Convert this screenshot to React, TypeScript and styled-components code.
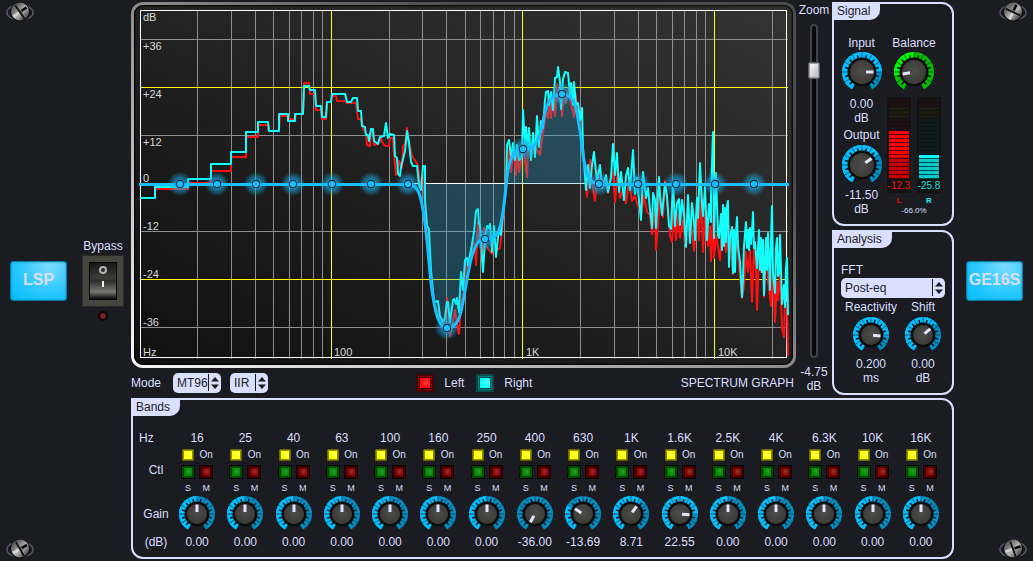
import React, { useState } from 'react';
import styled, { createGlobalStyle, css } from 'styled-components';

const INK = '#1b1c22';
const PALE = '#dadfff';

const GlobalStyle = createGlobalStyle`
  *, *::before, *::after { box-sizing: border-box; }
  body {
    margin: 0;
    background: ${INK};
    color: ${PALE};
    font-family: "Liberation Sans", Arial, sans-serif;
    font-size: 12px;
    line-height: 14px;
  }
  button, select, input { font: inherit; margin: 0; }
`;

/* ---------- page skeleton ---------- */

const Page = styled.div`
  display: grid;
  grid-template-columns: 131px minmax(0, 1fr) 79px;
  min-height: 100vh;
`;

const Rail = styled.aside<{ $side: 'left' | 'right' }>`
  display: flex;
  flex-direction: column;
  justify-content: space-between;
  align-items: ${p => (p.$side === 'left' ? 'flex-start' : 'flex-end')};
  padding: 2px 6px;
`;

const RailControls = styled.div`
  display: flex;
  align-items: center;
  gap: 15px;
  padding: 0 4px;
`;

const Main = styled.main`
  display: flex;
  flex-direction: column;
  padding: 2px 0;
`;

const Upper = styled.div`
  display: grid;
  grid-template-columns: minmax(0, 1fr) 36px 122px;
`;

const GraphColumn = styled.div`
  display: flex;
  flex-direction: column;
`;

const GraphFrame = styled.div`
  border: 3px solid transparent;
  border-radius: 12px;
  padding: 1px;
  background:
    linear-gradient(to top right, #101010, #1a1a1a 30%, #262626 60%, #333333) padding-box,
    linear-gradient(to top right, #f8f8f8, #b8b8b8 30%, #8c8c8c 50%, #4a4a4a 75%) border-box;
  box-shadow: inset 0 0 2px 1px #000000;
`;

const GraphSvg = styled.svg`
  display: block;
  width: 100%;
  height: auto;
  font-size: 11px;
  fill: #d8d8d8;
`;

const ModeBar = styled.div`
  display: flex;
  justify-content: space-between;
  align-items: center;
  height: 30px;
  padding-right: 2px;
`;

const Inline = styled.div<{ $gap: number }>`
  display: flex;
  align-items: center;
  gap: ${p => p.$gap}px;
`;

const InlineLabel = styled.label<{ $gap?: number }>`
  display: flex;
  align-items: center;
  gap: ${p => p.$gap ?? 10}px;
`;

const ZoomColumn = styled.div`
  display: flex;
  flex-direction: column;
  align-items: center;
  padding: 1px 0 4px;
  text-align: center;
`;

const SideColumn = styled.div`
  display: flex;
  flex-direction: column;
  gap: 4px;
  padding-bottom: 3px;
`;

/* ---------- panels ---------- */

const Panel = styled.section<{ $grow?: boolean }>`
  position: relative;
  border: 2px solid ${PALE};
  border-radius: 0 12px 12px 12px;
  padding-top: 31px;
  ${p => p.$grow && 'flex: 1;'}
`;

const PanelTitle = styled.h2`
  position: absolute;
  left: -2px;
  top: -2px;
  height: 18px;
  margin: 0;
  padding: 2px 10px 2px 5px;
  border-radius: 0 0 10px 0;
  background: ${PALE};
  color: ${INK};
  font-size: 12px;
  font-weight: 400;
  line-height: 14px;
`;

const SignalBody = styled.div`
  display: grid;
  grid-template-columns: 1fr 1fr;
  padding: 1px 11px 8px 2px;
`;

const Stack = styled.div`
  display: flex;
  flex-direction: column;
  align-items: center;
  text-align: center;
  white-space: nowrap;
`;

const AnalysisBody = styled.div`
  display: flex;
  flex-direction: column;
  padding: 0 7px 8px;
`;

const AnalysisKnobs = styled.div`
  display: grid;
  grid-template-columns: 52px 52px;
  padding: 2px 0 0 4px;
`;

/* ---------- selects ---------- */

const SelectShell = styled.span<{ $width?: number }>`
  position: relative;
  display: block;
  height: 20px;
  width: ${p => (p.$width ? `${p.$width}px` : '100%')};
  margin-top: ${p => (p.$width ? 0 : 1)}px;
`;

const NativeSelect = styled.select`
  appearance: none;
  display: block;
  width: 100%;
  height: 20px;
  padding: 0 0 0 4px;
  border: 0;
  border-radius: 5px;
  background: ${PALE};
  color: ${INK};
`;

const SelectArrows = styled.svg`
  position: absolute;
  right: 0;
  top: 0;
  pointer-events: none;
`;

function Select({ id, value, width, name }: { id: string; value: string; width?: number; name?: string }) {
  return (
    <SelectShell $width={width}>
      <NativeSelect id={id} defaultValue={value} aria-label={name}>
        <option>{value}</option>
      </NativeSelect>
      <SelectArrows width="14" height="20" viewBox="0 0 14 20" aria-hidden="true">
        <path d="M1.500 1v17" stroke={INK} strokeWidth="1" />
        <path d="M4 8.500h8L8 4zM4 11.500h8L8 16z" fill={INK} />
      </SelectArrows>
    </SelectShell>
  );
}

/* ---------- square lights ---------- */

type LightTone = 'yellow' | 'green' | 'maroon' | 'red' | 'cyan';

const tones: Record<LightTone, { rim: string; mid: string; core: string; shine: string }> = {
  yellow: { rim: '#6b6a00', mid: '#8f8d00', core: '#ffff00', shine: '#ffff50' },
  green: { rim: '#020602', mid: '#004800', core: '#008400', shine: '#2f9a2f' },
  maroon: { rim: '#070202', mid: '#440000', core: '#800000', shine: '#983030' },
  red: { rim: '#4a0000', mid: '#7c0000', core: '#ff0000', shine: '#ff4040' },
  cyan: { rim: '#004c4c', mid: '#007c7c', core: '#00ffff', shine: '#58ffff' },
};

const Light = styled.input<{ $tone: LightTone; $size: number }>`
  appearance: none;
  display: block;
  flex: none;
  width: ${p => p.$size}px;
  height: ${p => p.$size}px;
  border: ${p => (p.$size > 16 ? 2 : 1)}px solid ${p => tones[p.$tone].rim};
  border-radius: 1px;
  background: radial-gradient(circle at 60% 45%, ${p => tones[p.$tone].shine}, ${p => tones[p.$tone].core} 70%) content-box,
    ${p => tones[p.$tone].mid};
  padding: ${p => (p.$size === 12 ? 1 : 2)}px;
  ${p =>
    p.$size > 16 &&
    css`
      box-shadow: inset 0 0 0 1px ${tones[p.$tone].mid}, inset 0 0 0 2px ${tones[p.$tone].rim};
    `}
`;

/* ---------- knobs ---------- */

const KnobShell = styled.label<{ $size: number }>`
  position: relative;
  display: block;
  width: ${p => p.$size}px;
  height: ${p => p.$size}px;
`;

const KnobInput = styled.input`
  position: absolute;
  inset: 0;
  width: 100%;
  height: 100%;
  opacity: 0;
`;

const polar = (angle: number, r: number) => {
  const a = (angle * Math.PI) / 180;
  return `${(Math.sin(a) * r).toFixed(2)} ${(-Math.cos(a) * r).toFixed(2)}`;
};

const arc = (from: number, to: number, r: number) =>
  `M${polar(from, r)}A${r} ${r} 0 ${to - from > 180 ? 1 : 0} 1 ${polar(to, r)}`;

const NOTCHES = Array.from({ length: 19 }, (_, i) => -135 + i * 15);

interface KnobProps {
  name: string;
  angle: number;
  size?: number;
  green?: boolean;
}

function Knob({ name, angle, size = 36, green }: KnobProps) {
  const [turn, setTurn] = useState(angle);
  const R = size / 2;
  const mid = R - 3;
  const lit = green ? '#00fa00' : '#00bfff';
  const dim = green ? '#00c000' : '#008fc4';
  const litFrom = green ? Math.min(turn, 0) : -150;
  const litTo = green ? Math.max(turn, 0) : turn;
  return (
    <KnobShell $size={size}>
      <svg width={size} height={size} viewBox={`${-R} ${-R} ${size} ${size}`} aria-hidden="true">
        <defs>
          <radialGradient id="knobFace" cx="0.5" cy="0.45" r="0.6">
            <stop offset="0" stopColor="#4c4c48" />
            <stop offset="1" stopColor="#393935" />
          </radialGradient>
        </defs>
        <path d={arc(-150, 150, mid)} fill="none" stroke={dim} strokeWidth="6" />
        {litTo > litFrom && <path d={arc(litFrom, litTo, mid)} fill="none" stroke={lit} strokeWidth="6" />}
        {NOTCHES.map((a, i) => (
          <path
            key={a}
            d={`M${polar(a, R - 6)}L${polar(a, i % 2 ? R : R - 2.5)}`}
            stroke={INK}
            strokeWidth={i % 2 ? 0.8 : 1.6}
            strokeOpacity={i % 2 ? 0.75 : 1}
          />
        ))}
        <circle r={R - 5.5} fill="#0c0c0c" />
        <circle r={R - 8} fill="url(#knobFace)" />
        <path d={`M${polar(turn, R - 16)}L${polar(turn, R - 8.5)}`} stroke="#e4e4fc" strokeWidth="3" />
      </svg>
      <KnobInput
        type="range"
        min={-150}
        max={150}
        value={turn}
        aria-label={name}
        onChange={e => setTurn(Number(e.target.value))}
      />
    </KnobShell>
  );
}

/* ---------- meters ---------- */

const Meters = styled.div`
  display: flex;
  justify-content: center;
  gap: 6px;
`;

const MeterBox = styled.div`
  display: flex;
  flex-direction: column;
  gap: 1px;
  width: 24px;
  height: 96px;
  padding-top: 2px;
  background: #111214;
`;

const MeterBar = styled.div<{ $bright: string; $deep: string; $off: string; $lit: number }>`
  height: 80px;
  margin: 0 2px;
  background:
    repeating-linear-gradient(to bottom, transparent 0 3px, rgba(12, 14, 16, 0.75) 3px 4px),
    linear-gradient(
      to bottom,
      #1f1011 0 8px,
      #1c1c0e 8px 20px,
      ${p => p.$off} 20px ${p => 80 - p.$lit}px,
      ${p => p.$bright} ${p => 80 - p.$lit}px ${p => 80 - Math.round(p.$lit * (p.$lit > 30 ? 0.45 : 0.85))}px,
      ${p => p.$deep} 0
    );
`;

const MeterValue = styled.span<{ $color: string }>`
  color: ${p => p.$color};
  font-size: 10px;
  line-height: 12px;
  display: flex;
  justify-content: center;
  white-space: nowrap;
`;

const ChannelNames = styled.div`
  display: grid;
  grid-template-columns: 24px 24px;
  gap: 6px;
  margin-top: 3px;
  font-size: 8px;
  font-weight: 700;
  line-height: 10px;
`;

const ChannelName = styled.span<{ $color: string }>`
  color: ${p => p.$color};
`;

const Percent = styled.span`
  font-size: 8px;
  line-height: 10px;
`;

/* ---------- zoom fader ---------- */

const Fader = styled.input`
  appearance: none;
  writing-mode: vertical-lr;
  direction: rtl;
  width: 14px;
  height: 334px;
  margin: 7px 0;
  background: transparent;

  &::-webkit-slider-runnable-track {
    width: 8px;
    height: 100%;
    border: 2px solid #41414f;
    border-radius: 4px;
    background: #08080a;
  }

  &::-webkit-slider-thumb {
    appearance: none;
    width: 12px;
    height: 17px;
    margin-left: -4px;
    border: 1px solid #5c5c68;
    border-radius: 2px;
    background: linear-gradient(to bottom right, #ffffff, #b4b4bc);
    box-shadow: inset 0 0 0 1px #9c9ca8;
  }
`;

/* ---------- rails ---------- */

const Badge = styled.button`
  display: flex;
  justify-content: center;
  align-items: center;
  width: 57px;
  height: 40px;
  padding: 0 0 2px;
  border: 1px solid #067fa9;
  border-radius: 3px;
  background: radial-gradient(ellipse at 70% 10%, #7cdcff, #2cc8ff 55%, #00bcfb);
  box-shadow: inset 0 0 2px #067fa9;
  color: ${PALE};
  font-size: 16px;
  font-weight: 700;
  white-space: nowrap;
`;

const BypassGroup = styled.label`
  display: flex;
  flex-direction: column;
  align-items: center;
  padding-bottom: 2px;
`;

const Rocker = styled.span`
  position: relative;
  display: block;
  width: 42px;
  height: 52px;
  margin: 2px 0 4px;
`;

const RockerInput = styled.input`
  position: absolute;
  inset: 0;
  width: 100%;
  height: 100%;
  opacity: 0;
`;

const Lamp = styled.span`
  width: 10px;
  height: 10px;
  border: 2px solid #0d0606;
  border-radius: 50%;
  background: radial-gradient(#8c2a2a, #5c1414);
`;

function Screw({ tilt }: { tilt: number }) {
  return (
    <svg width="28" height="20" viewBox="0 0 28 20" aria-hidden="true">
      <defs>
        <linearGradient id="screwFace" x1="0" y1="0" x2="1" y2="1">
          <stop offset="0" stopColor="#3c3c3c" />
          <stop offset="0.3" stopColor="#707070" />
          <stop offset="0.55" stopColor="#b8b8b8" />
          <stop offset="1" stopColor="#0c0c0c" />
        </linearGradient>
      </defs>
      <ellipse cx="14" cy="10.500" rx="13" ry="7.500" fill="#17171c" stroke="#55556a" strokeWidth="1.500" />
      <circle cx="14" cy="10" r="10" fill="#121214" />
      <circle cx="14" cy="9.500" r="9" fill="url(#screwFace)" />
      <g transform={`rotate(${tilt} 14 10)`} strokeWidth="2.600">
        <path d="M6 10h8" stroke="#d4d4d4" />
        <path d="M14 10h8" stroke="#080808" />
        <path d="M14 2v16" stroke="#141414" strokeWidth="2" />
        <path d="M15.500 3v14" stroke="#8c8c8c" strokeWidth="0.800" />
      </g>
    </svg>
  );
}

/* ---------- bands ---------- */

const BandsBody = styled.div`
  display: grid;
  grid-template-columns: 40px minmax(0, 1fr);
  padding: 0 7px 8px 0;
`;

const BandLabels = styled.div`
  display: flex;
  flex-direction: column;
  padding-left: 6px;
`;

const RowLabel = styled.span<{ $above?: number; $centered?: boolean }>`
  margin-top: ${p => p.$above ?? 0}px;
  text-align: ${p => (p.$centered ? 'center' : 'left')};
`;

const BandGrid = styled.div`
  display: grid;
  grid-template-columns: repeat(16, minmax(0, 1fr));
`;

const BandCell = styled.div`
  display: flex;
  flex-direction: column;
  align-items: center;
`;

const Toggles = styled.div`
  display: grid;
  grid-template-columns: 18px 18px;
  grid-template-rows: 12px 14px 12px;
  row-gap: 4px;
  justify-items: center;
  align-items: center;
  margin-top: 4px;
  font-size: 10px;
  line-height: 12px;
`;

const SmallCaption = styled.label`
  height: 14px;
  font-size: 9px;
`;

/* ---------- graph data ---------- */

const DECADES = [139.5, 331, 522.5, 714.5];
const MINOR_X = DECADES.flatMap(d => [2, 3, 4, 5, 6, 7, 8, 9].map(n => Math.round(d + Math.log10(n) * 191.6) + 0.5)).filter(
  x => x < 780,
);
const MINOR_Y = [39.5, 135.5, 231.5, 327.5];

const NODES: [number, number][] = [
  [180, 184], [217, 184], [256, 184], [293, 184], [332, 184], [371, 184], [408, 184], [447, 328],
  [485, 239], [523, 149], [562, 94], [599, 184], [638, 184], [676, 184], [715, 184], [754, 184],
];

const CURVE =
  'M408 184C418 184 421 196 424 216C429 250 429 275 433 297C436 316 440 328 447 328C455 328 459 322 462 307' +
  'C466 288 469 263 473 253C476 242 480 239 485 239C494 239 498 237 501 223C504 210 505 195 507 177' +
  'C509 160 513 149 523 149C533 149 538 144 542 127C546 103 550 94 562 94C573 94 576 103 580 131' +
  'C584 158 584 184 599 184';

const CYAN_LOW =
  '140,198 155,198 155,187 188,187 188,179 211,179 211,164 231,164 231,152 246,152 246,132 258,132 258,122 268,122 269,131 279,131 279,114 288,114 288,121 295,121 295,114 303,114 304,86 309,86 310,90 315,90 316,106 321,106 322,117 326,117 327,102 331,102 332,94 345,94 347,102 351,102 353,98 357,98 358,111 361,111 362,126 365,127 366,135 368,135 369,141 371,129 373,129 374,141 378,144 380,137 384,136 386,123 388,138 390,134 394,135 395,156 397,158 398,174 400,176 401,167 404,155 405,151 407,131 409,143 411,162 413,166 417,166 419,185 421,190 423,166 425,166 425,200 427,226 429,229 431,270 434,302 438,301 440,316 443,322 445,318 447,302 448,302 450,322 453,300 454,299 456,304 457,298 459,312 461,272 463,290 465,260 467,258 468,265 471,250 474,232 476,211 478,209 479,224 480,225 483,272 485,240 487,226 489,228 490,224 492,252 494,226 496,257 499,228 501,235 503,212 505,200 506,185 507,145 509,140 511,157 513,143 515,160 517,145 519,160 521,158';

const CYAN_HIGH =
  '522,155 523,110 525,145 526,127 528,150 529,128 531,160 533,133 535,157 537,116 539,147 541,121 543,128 545,100 546,92 548,91 549,105 551,92 553,110 555,78 557,77 558,67 560,82 561,109 563,79 565,72 568,73 570,95 571,83 573,105 574,82 576,105 578,103 580,120 582,108 583,148 586,190 588,165 590,188 592,165 594,152 597,182 600,165 602,188 606,175 608,192 611,178 613,144 615,175 617,153 619,192 621,172 624,200 626,176 628,168 630,190 633,150 635,194 637,178 639,200 641,220 643,172 646,198 648,188 650,210 652,228 653,193 655,200 656,228 659,177 660,196 662,215 665,183 667,196 669,226 671,229 673,182 675,226 677,203 679,199 680,225 682,200 684,215 686,247 688,195 690,243 692,203 694,222 695,240 697,198 698,218 700,163 702,204 703,216 705,187 707,240 709,204 711,222 711,192 713,132 714,238 716,173 718,235 719,238 721,214 722,250 723,205 724,246 725,208 726,242 727,206 728,201 729,267 730,238 732,227 733,273 734,230 735,272 736,232 737,217 738,246 740,262 742,297 743,278 744,246 746,222 747,248 748,230 749,250 750,228 751,244 752,232 753,212 754,248 755,242 757,268 759,230 760,270 761,238 762,272 763,240 764,295 766,238 767,270 768,233 770,290 771,240 772,206 773,274 775,293 776,248 777,238 778,276 779,274 780,235 782,304 784,285 785,307 786,268 787,258 788,315';

const RED_LOW =
  '155,189 188,189 188,183 211,183 211,171 231,171 231,157 246,157 246,137 258,137 258,125 268,125 269,131 279,131 280,116 288,116 289,119 295,119 296,114 303,114 304,83 309,83 310,94 315,94 316,110 321,110 322,119 326,119 327,102 331,102 332,96 336,96 337,101 345,101 347,103 356,103 358,119 361,119 363,129 366,133 367,145 370,146 371,130 373,130 374,145 378,144 381,137 382,142 385,146 389,146 390,138 393,138 394,154 396,175 398,172 399,161 402,168 403,146 405,144 407,128 409,143 412,156 416,162 418,165 420,185 423,176 425,205 428,232 431,275 434,304 438,312 441,322 444,326 447,298 449,322 450,336 453,322 455,310 458,330 459,334 461,305 464,290 466,268 470,260 473,240 475,246 476,265 478,222 480,240 482,262 484,228 486,246 489,250 492,254 494,238 497,250 500,248 502,230 504,205 507,170 509,150 511,172 513,150 515,165 516,175 517,148 519,172 521,160';

const RED_HIGH =
  '523,140 525,160 527,177 528,150 532,150 536,148 540,155 543,133 546,112 548,118 550,100 551,118 553,98 555,116 557,84 559,100 561,100 562,116 564,92 566,103 569,86 571,104 574,117 575,92 578,110 580,124 583,150 587,197 590,160 593,190 595,201 598,170 601,188 605,178 608,193 611,175 613,172 615,202 618,168 620,198 623,190 626,203 629,180 632,201 635,196 638,206 641,215 644,196 647,212 650,215 652,234 655,205 656,250 658,224 660,192 663,217 665,181 668,212 670,236 672,242 674,212 676,240 678,214 680,238 683,220 685,243 687,214 689,236 691,222 694,251 697,205 699,240 701,186 703,252 705,214 708,246 710,226 711,261 713,215 714,258 716,235 718,247 720,260 722,226 724,236 726,252 729,226 731,250 733,274 735,240 738,253 740,276 742,298 744,286 746,252 748,272 750,250 752,302 754,248 756,270 757,310 759,252 761,272 763,268 764,297 766,252 768,280 771,306 773,264 775,322 777,282 778,300 780,272 782,328 784,337 785,300 787,306 788,356';

const LEVEL_LABELS: [number, string][] = [
  [50, '+36'], [98, '+24'], [146, '+12'], [182, '0'], [230, '-12'], [278, '-24'], [326, '-36'],
];

function Graph() {
  return (
    <GraphSvg viewBox="135 6 657 358" role="img" aria-label="Spectrum graph">
      <defs>
        <radialGradient id="nodeGlow">
          <stop offset="0.3" stopColor="#16b4f0" stopOpacity="0.75" />
          <stop offset="0.7" stopColor="#16a0d8" stopOpacity="0.4" />
          <stop offset="1" stopColor="#1690c0" stopOpacity="0.05" />
        </radialGradient>
      </defs>
      <g stroke="#8e8e8e" strokeWidth="1">
        {MINOR_X.map(x => <path key={x} d={`M${x} 10V359`} />)}
        {MINOR_Y.map(y => <path key={y} d={`M140 ${y}H788`} />)}
      </g>
      <g stroke="#ffff00" strokeWidth="1">
        <path d="M331.500 10V359M522.500 10V359M714.500 10V359" />
        <path d="M140 87.500H788M140 279.500H788" />
      </g>
      <path d="M140.500 358V10.500H786.500V358M140 357.500H787M140 183.500H787" fill="none" stroke="#ffffff" />
      <text x="143" y="21">dB</text>
      {LEVEL_LABELS.map(([y, t]) => <text key={t} x="143" y={y}>{t}</text>)}
      <text x="143" y="356">Hz</text>
      <text x="334" y="356">100</text>
      <text x="526" y="356">1K</text>
      <text x="718" y="356">10K</text>
      <g fill="none" strokeWidth="2" strokeLinejoin="round">
        <polyline points={`${RED_LOW} ${RED_HIGH}`} stroke="#ff1010" />
        <polyline points={`${CYAN_LOW} ${CYAN_HIGH}`} stroke="#12ffff" />
      </g>
      <path d={`${CURVE}Z`} fill="#28b4e6" fillOpacity="0.26" />
      {NODES.map(([x, y]) => <circle key={x} cx={x} cy={y} r="12" fill="url(#nodeGlow)" />)}
      <path d={`M139 184.500H408${CURVE.replace('M', 'L')}V184.500H789`} fill="none" stroke="#16bfff" strokeWidth="3" />
      {NODES.map(([x, y]) => (
        <circle key={x} cx={x} cy={y} r="3.700" fill="#16bfff" stroke="#0a2c3c" strokeWidth="1.200" />
      ))}
    </GraphSvg>
  );
}

const BANDS: [string, string, number][] = [
  ['16', '0.00', 0], ['25', '0.00', 0], ['40', '0.00', 0], ['63', '0.00', 0],
  ['100', '0.00', 0], ['160', '0.00', 0], ['250', '0.00', 0], ['400', '-36.00', -150],
  ['630', '-13.69', -57], ['1K', '8.71', 36], ['1.6K', '22.55', 94], ['2.5K', '0.00', 0],
  ['4K', '0.00', 0], ['6.3K', '0.00', 0], ['10K', '0.00', 0], ['16K', '0.00', 0],
];

const Spaced = styled.div<{ $top: number; $bottom: number }>`
  padding: ${p => p.$top}px 0 ${p => p.$bottom}px;
`;

function Band({ freq, gain, angle }: { freq: string; gain: string; angle: number }) {
  return (
    <BandCell>
      <span>{freq}</span>
      <Toggles>
        <Light type="checkbox" id={`on-${freq}`} defaultChecked $tone="yellow" $size={12} />
        <label htmlFor={`on-${freq}`}>On</label>
        <Light type="checkbox" id={`solo-${freq}`} $tone="green" $size={14} />
        <Light type="checkbox" id={`mute-${freq}`} $tone="maroon" $size={14} />
        <SmallCaption htmlFor={`solo-${freq}`}>S</SmallCaption>
        <SmallCaption htmlFor={`mute-${freq}`}>M</SmallCaption>
      </Toggles>
      <Spaced $top={1} $bottom={3}>
        <Knob name={`${freq} Hz gain`} angle={angle} />
      </Spaced>
      <span>{gain}</span>
    </BandCell>
  );
}

export default function App() {
  return (
    <>
      <GlobalStyle />
      <Page>
        <Rail $side="left">
          <Screw tilt={-35} />
          <RailControls>
            <Badge type="button">LSP</Badge>
            <BypassGroup>
              Bypass
              <Rocker>
                <svg width="42" height="52" viewBox="0 0 42 52" aria-hidden="true">
                  <defs>
                    <linearGradient id="rockerFace" x1="0" y1="0" x2="0" y2="1">
                      <stop offset="0" stopColor="#161616" />
                      <stop offset="0.42" stopColor="#3c3c39" />
                      <stop offset="0.5" stopColor="#2c2c2a" />
                      <stop offset="0.8" stopColor="#787872" />
                      <stop offset="0.85" stopColor="#5a5a56" />
                      <stop offset="1" stopColor="#080808" />
                    </linearGradient>
                  </defs>
                  <rect x="0.500" y="0.500" width="41" height="51" fill="#46463f" stroke="#2a2a26" />
                  <rect x="7" y="7" width="28" height="38" fill="#050505" />
                  <rect x="8" y="8" width="26" height="36" fill="url(#rockerFace)" />
                  <circle cx="21" cy="15" r="3" fill="none" stroke="#b4b4b4" strokeWidth="2" />
                  <path d="M21 26v6" stroke="#ffffff" strokeWidth="2" />
                </svg>
                <RockerInput type="checkbox" />
              </Rocker>
              <Lamp />
            </BypassGroup>
          </RailControls>
          <Screw tilt={-30} />
        </Rail>

        <Main>
          <Upper>
            <GraphColumn>
              <GraphFrame>
                <Graph />
              </GraphFrame>
              <ModeBar>
                <Inline $gap={9}>
                  <InlineLabel $gap={12} htmlFor="mode">
                    Mode
                    <Select id="mode" value="MT96" width={48} />
                  </InlineLabel>
                  <Select id="filter" value="IIR" width={38} name="Filter" />
                </Inline>
                <Inline $gap={12}>
                  <InlineLabel>
                    <Light type="checkbox" defaultChecked $tone="red" $size={18} />
                    Left
                  </InlineLabel>
                  <InlineLabel>
                    <Light type="checkbox" defaultChecked $tone="cyan" $size={18} />
                    Right
                  </InlineLabel>
                </Inline>
                <span>SPECTRUM GRAPH</span>
              </ModeBar>
            </GraphColumn>

            <ZoomColumn>
              <label htmlFor="zoom">Zoom</label>
              <Fader id="zoom" type="range" min={0} max={1000} defaultValue={884} />
              <span>-4.75</span>
              <span>dB</span>
            </ZoomColumn>

            <SideColumn>
              <Panel>
                <PanelTitle>Signal</PanelTitle>
                <SignalBody>
                  <Stack>
                    <span>Input</span>
                    <Spaced $top={2} $bottom={5}>
                      <Knob name="Input" angle={90} size={40} />
                    </Spaced>
                    <span>0.00</span>
                    <span>dB</span>
                    <Spaced $top={3} $bottom={3}>Output</Spaced>
                    <Knob name="Output" angle={56} size={40} />
                    <Spaced $top={3} $bottom={0}>-11.50</Spaced>
                    <span>dB</span>
                  </Stack>
                  <Stack>
                    <span>Balance</span>
                    <Spaced $top={2} $bottom={5}>
                      <Knob name="Balance" angle={-100} size={40} green />
                    </Spaced>
                    <Meters>
                      <MeterBox>
                        <MeterBar $bright="#ff0000" $deep="#cc0000" $off="#1f1011" $lit={48} />
                        <MeterValue $color="#ff1010">-12.3</MeterValue>
                      </MeterBox>
                      <MeterBox>
                        <MeterBar $bright="#00ffff" $deep="#00cccc" $off="#0f1c1d" $lit={24} />
                        <MeterValue $color="#10e0e0">-25.8</MeterValue>
                      </MeterBox>
                    </Meters>
                    <ChannelNames>
                      <ChannelName $color="#ff0000">L</ChannelName>
                      <ChannelName $color="#00ffff">R</ChannelName>
                    </ChannelNames>
                    <Percent>-66.0%</Percent>
                  </Stack>
                </SignalBody>
              </Panel>

              <Panel $grow>
                <PanelTitle>Analysis</PanelTitle>
                <AnalysisBody>
                  <label htmlFor="fft">FFT</label>
                  <Select id="fft" value="Post-eq" />
                  <AnalysisKnobs>
                    <Stack>
                      <span>Reactivity</span>
                      <Spaced $top={3} $bottom={4}>
                        <Knob name="Reactivity" angle={96} />
                      </Spaced>
                      <span>0.200</span>
                      <span>ms</span>
                    </Stack>
                    <Stack>
                      <span>Shift</span>
                      <Spaced $top={3} $bottom={4}>
                        <Knob name="Shift" angle={50} />
                      </Spaced>
                      <span>0.00</span>
                      <span>dB</span>
                    </Stack>
                  </AnalysisKnobs>
                </AnalysisBody>
              </Panel>
            </SideColumn>
          </Upper>

          <Panel>
            <PanelTitle>Bands</PanelTitle>
            <BandsBody>
              <BandLabels>
                <RowLabel>Hz</RowLabel>
                <RowLabel $centered $above={18}>Ctl</RowLabel>
                <RowLabel $centered $above={30}>Gain</RowLabel>
                <RowLabel $centered $above={14}>(dB)</RowLabel>
              </BandLabels>
              <BandGrid>
                {BANDS.map(([freq, gain, angle]) => (
                  <Band key={freq} freq={freq} gain={gain} angle={angle} />
                ))}
              </BandGrid>
            </BandsBody>
          </Panel>
        </Main>

        <Rail $side="right">
          <Screw tilt={-65} />
          <RailControls>
            <Badge type="button">GE16S</Badge>
          </RailControls>
          <Screw tilt={-20} />
        </Rail>
      </Page>
    </>
  );
}
